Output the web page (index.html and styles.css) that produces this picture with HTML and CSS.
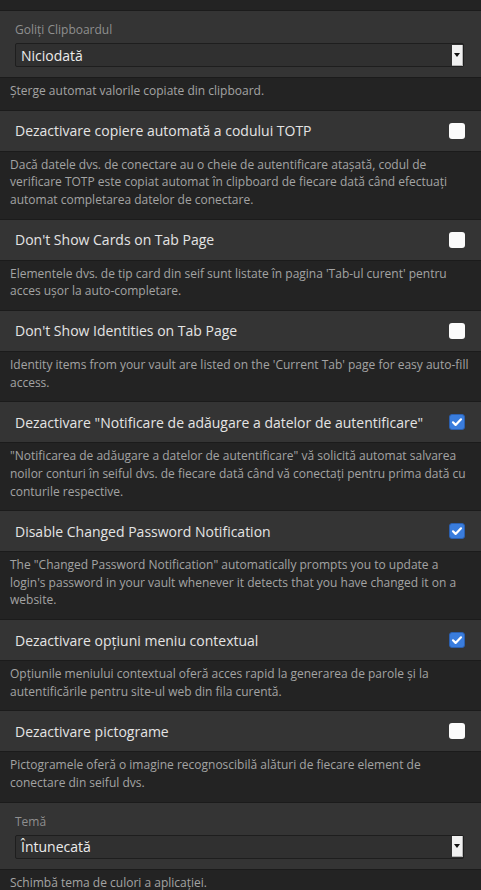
FILE: index.html
```html
<!DOCTYPE html>
<html lang="ro">
<head>
<meta charset="utf-8">
<link rel="stylesheet" href="styles.css">
</head>
<body>
<div class="page">
  <div class="spacer"></div>

  <div class="box select-box">
    <label class="field-label">Goliţi Clipboardul</label>
    <div class="select"><span class="select-text">Niciodată</span><span class="select-btn"><span class="arrow"></span></span></div>
  </div>
  <div class="desc">Şterge automat valorile copiate din clipboard.</div>

  <div class="box row"><span class="row-label">Dezactivare copiere automată a codului TOTP</span><span class="check"></span></div>
  <div class="desc">Dacă datele dvs. de conectare au o cheie de autentificare atașată, codul de verificare TOTP este copiat automat în clipboard de fiecare dată când efectuați automat completarea datelor de conectare.</div>

  <div class="box row"><span class="row-label">Don't Show Cards on Tab Page</span><span class="check"></span></div>
  <div class="desc">Elementele dvs. de tip card din seif sunt listate în pagina 'Tab-ul curent' pentru acces ușor la auto-completare.</div>

  <div class="box row"><span class="row-label">Don't Show Identities on Tab Page</span><span class="check"></span></div>
  <div class="desc">Identity items from your vault are listed on the 'Current Tab' page for easy auto-fill access.</div>

  <div class="box row"><span class="row-label">Dezactivare "Notificare de adăugare a datelor de autentificare"</span><span class="check checked"><svg viewBox="0 0 16 16" width="16" height="16"><path d="M4 8.3l2.6 2.6L12 5.3" fill="none" stroke="#fff" stroke-width="2.2" stroke-linecap="round" stroke-linejoin="round"/></svg></span></div>
  <div class="desc">"Notificarea de adăugare a datelor de autentificare" vă solicită automat salvarea noilor conturi în seiful dvs. de fiecare dată când vă conectați pentru prima dată cu conturile respective.</div>

  <div class="box row"><span class="row-label">Disable Changed Password Notification</span><span class="check checked"><svg viewBox="0 0 16 16" width="16" height="16"><path d="M4 8.3l2.6 2.6L12 5.3" fill="none" stroke="#fff" stroke-width="2.2" stroke-linecap="round" stroke-linejoin="round"/></svg></span></div>
  <div class="desc">The "Changed Password Notification" automatically prompts you to update a login's password in your vault whenever it detects that you have changed it on a website.</div>

  <div class="box row"><span class="row-label">Dezactivare opţiuni meniu contextual</span><span class="check checked"><svg viewBox="0 0 16 16" width="16" height="16"><path d="M4 8.3l2.6 2.6L12 5.3" fill="none" stroke="#fff" stroke-width="2.2" stroke-linecap="round" stroke-linejoin="round"/></svg></span></div>
  <div class="desc">Opțiunile meniului contextual oferă acces rapid la generarea de parole și la autentificările pentru site-ul web din fila curentă.</div>

  <div class="box row"><span class="row-label">Dezactivare pictograme</span><span class="check"></span></div>
  <div class="desc">Pictogramele oferă o imagine recognoscibilă alături de fiecare element de conectare din seiful dvs.</div>

  <div class="box select-box">
    <label class="field-label">Temă</label>
    <div class="select"><span class="select-text">Întunecată</span><span class="select-btn"><span class="arrow"></span></span></div>
  </div>
  <div class="desc">Schimbă tema de culori a aplicației.</div>
</div>
</body>
</html>
```

FILE: styles.css
```css
html, body {
  margin: 0;
  padding: 0;
  background: #232323;
  font-family: "Open Sans", "Noto Sans", sans-serif;
}

.page {
  display: flex;
  flex-direction: column;
  width: 481px;
  overflow: hidden;
}

.spacer {
  height: 10px;
}

.box {
  background: #343434;
  border-top: 1px solid #1b1b1b;
  border-bottom: 1px solid #1b1b1b;
}

.row {
  height: 40px;
  display: flex;
  align-items: center;
  justify-content: space-between;
  padding: 0 16px 0 15px;
  gap: 10px;
}

.row-label {
  color: #e4e4e4;
  font-size: 14px;
  white-space: nowrap;
}

.check {
  flex: none;
  width: 16px;
  height: 16px;
  border-radius: 3px;
  background: #fbfbfb;
  box-sizing: border-box;
  display: flex;
}

.check.checked {
  background: #3a7ddd;
  border: 1px solid #2b5fae;
}

.check.checked svg {
  margin: -1px;
}

.select-box {
  padding: 10px 17px 10px 15px;
  display: flex;
  flex-direction: column;
  gap: 4px;
}

.field-label {
  color: #8f8f8f;
  font-size: 12px;
  line-height: 18px;
}

.select {
  height: 24px;
  box-sizing: border-box;
  border: 1px solid #1e1e1e;
  border-radius: 2px;
  background: #303030;
  display: flex;
  align-items: center;
  justify-content: space-between;
  padding-left: 5px;
}

.select-text {
  color: #ececec;
  font-size: 14px;
}

.select-btn {
  width: 11px;
  height: 21px;
  background: #f0f0f0;
  border-right: 1px solid #b5b5b5;
  border-bottom: 1px solid #b5b5b5;
  box-sizing: border-box;
  display: flex;
  align-items: center;
  justify-content: center;
}

.arrow {
  width: 0;
  height: 0;
  border-left: 3px solid transparent;
  border-right: 3px solid transparent;
  border-top: 4px solid #111;
}

.desc {
  color: #a3a3a3;
  font-size: 12px;
  line-height: 17.6px;
  padding: 4px 10px 10.15px 10px;
}
```
